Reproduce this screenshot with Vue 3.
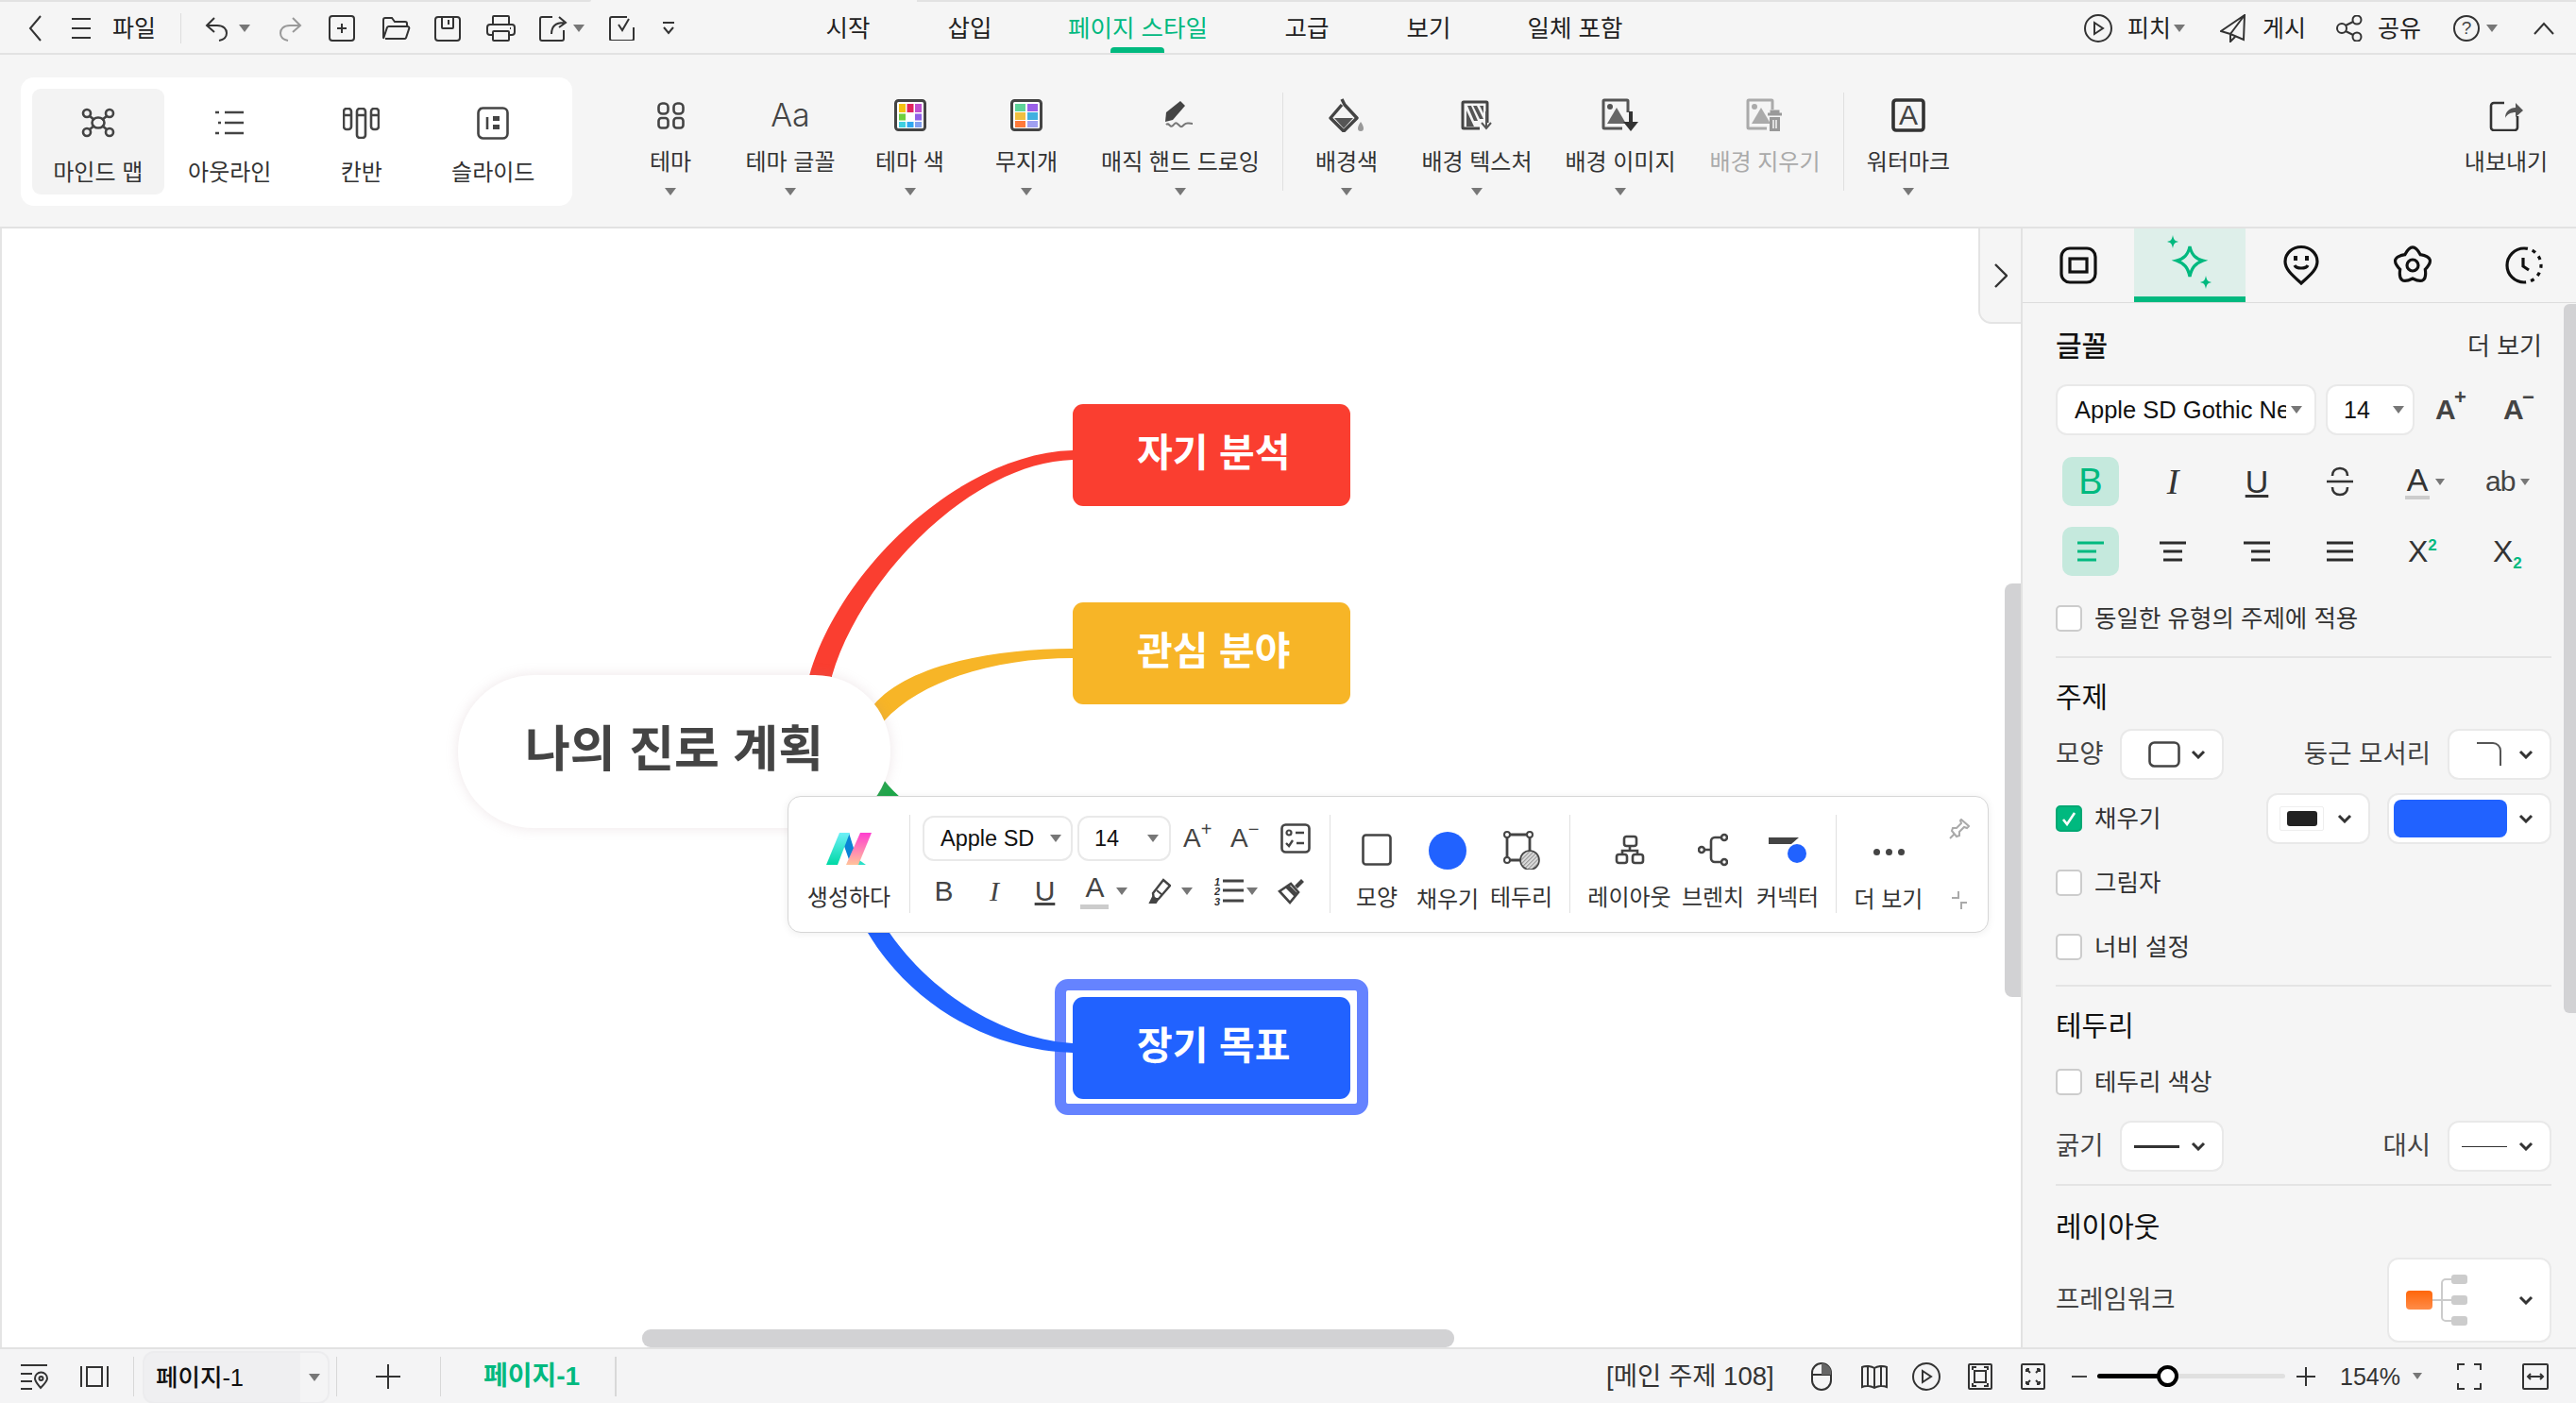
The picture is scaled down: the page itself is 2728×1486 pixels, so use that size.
<script setup>
const boardCells = [
  { label: '마인드 맵', active: true },
  { label: '아웃라인' },
  { label: '칸반' },
  { label: '슬라이드' }
]
</script>

<template>
  <div class="app">
    <div class="strip"><i class="strip-a"></i><i class="strip-b"></i></div>

    <header class="topbar">
      <div class="tb-left">
        <span class="c c46"><svg class="ic" width="16" height="28" viewBox="0 0 16 28"><path d="M14 1 3 14l11 13"/></svg></span>
        <span class="c c52"><svg class="ic" width="22" height="24" viewBox="0 0 22 24"><path d="M1 2h20M1 12h20M1 22h20"/></svg></span>
        <span class="c c60 tx">파일</span>
        <span class="c c38"><i class="vr v32"></i></span>
        <span class="c c40"><svg class="ic" width="28" height="27" viewBox="0 0 28 27"><path d="M11 2 3 10l8 7M3 10h11c7 0 10 4 10 8 0 4-3 7-8 8"/></svg></span>
        <span class="c c18"><i class="caret"></i></span>
        <span class="c c78"><svg class="ic grey" width="28" height="27" viewBox="0 0 28 27"><path d="m17 2 8 8-8 7M25 10H14C7 10 4 14 4 18c0 4 3 7 8 8"/></svg></span>
        <span class="c c32"><svg class="ic" width="28" height="28" viewBox="0 0 28 28"><rect x="1" y="1" width="26" height="26" rx="3"/><path d="M14 9v10M9 14h10"/></svg></span>
        <span class="c c82"><svg class="ic" width="32" height="26" viewBox="0 0 32 26"><path d="M3 23V4a2 2 0 0 1 2-2h7l3 4h11a2 2 0 0 1 2 2v3"/><path d="M3 24 7 12a2 2 0 0 1 2-1h19c2 0 3 1 2 3l-3 9a2 2 0 0 1-2 1H5"/></svg></span>
        <span class="c c28"><svg class="ic" width="28" height="27" viewBox="0 0 28 27"><rect x="1" y="1" width="26" height="25" rx="3"/><path d="M8 1v11a1 1 0 0 0 1 1h10a1 1 0 0 0 1-1V1M15 4v5"/></svg></span>
        <span class="c c84"><svg class="ic" width="31" height="28" viewBox="0 0 31 28"><path d="M7 10V2a1 1 0 0 1 1-1h15a1 1 0 0 1 1 1v8M7 21H4a3 3 0 0 1-3-3v-5a3 3 0 0 1 3-3h23a3 3 0 0 1 3 3v5a3 3 0 0 1-3 3h-3"/><rect x="7" y="17" width="17" height="10" rx="1"/><path d="M25 14h1"/></svg></span>
        <span class="c c28"><svg class="ic" width="30" height="27" viewBox="0 0 30 27"><path d="M14 1H3a2 2 0 0 0-2 2v21a2 2 0 0 0 2 2h21a2 2 0 0 0 2-2V15"/><path d="M13 19c0-8 4-12 13-12M21 1l7 6-7 5"/></svg></span>
        <span class="c c26"><i class="caret"></i></span>
        <span class="c c66"><svg class="ic" width="28" height="26" viewBox="0 0 28 26"><path d="M19 1H3a2 2 0 0 0-2 2v21a2 2 0 0 0 2 2h21a2 2 0 0 0 2-2V12"/><path d="M21 3 14 15l-4-6"/></svg></span>
        <span class="c c32"><svg class="ic" width="14" height="14" viewBox="0 0 14 14"><path d="M1 1h12M2 6l5 6 5-6"/></svg></span>
      </div>

      <nav class="tabs">
        <span class="tab w128">시작</span>
        <span class="tab w130">삽입</span>
        <span class="tab w226 on">페이지 스타일</span>
        <span class="tab w132">고급</span>
        <span class="tab w126">보기</span>
        <span class="tab w184">일체 포함</span>
      </nav>

      <div class="tb-right">
        <span class="c c60"><svg class="ic" width="30" height="30" viewBox="0 0 30 30"><circle cx="15" cy="15" r="14"/><path d="M11 9v12l9-6z"/></svg></span>
        <span class="c c48 tx">피치</span>
        <span class="c c16"><i class="caret"></i></span>
        <span class="c c50 ml24"><svg class="ic" width="28" height="30" viewBox="0 0 28 30"><path d="M26 1 1 18l10 3 14 6zM26 1 11 21l0 8 5-5"/></svg></span>
        <span class="c c46 ml6 tx">게시</span>
        <span class="c c48 ml22"><svg class="ic" width="28" height="28" viewBox="0 0 28 28"><circle cx="6" cy="14" r="5"/><circle cx="22" cy="5" r="4.5"/><circle cx="22" cy="23" r="4.5"/><path d="m10 11 8-4M10 17l8 4"/></svg></span>
        <span class="c c46 ml6 tx">공유</span>
        <span class="c c40 ml28"><svg class="ic" width="28" height="28" viewBox="0 0 28 28"><circle cx="14" cy="14" r="13"/><text x="14" y="20" class="qm">?</text></svg></span>
        <span class="c c14"><i class="caret"></i></span>
        <span class="c c40 ml28"><svg class="ic" width="24" height="14" viewBox="0 0 24 14"><path d="m2 13 10-11 10 11"/></svg></span>
      </div>
    </header>

    <section class="ribbon">
      <div class="board">
        <div v-for="(cell, i) in boardCells" :key="cell.label" class="board-cell" :class="{ on: cell.active }">
          <span class="icon-box">
            <svg v-if="i === 0" class="ic thick" width="36" height="32" viewBox="0 0 36 32"><circle cx="6" cy="6" r="4"/><circle cx="30" cy="6" r="4"/><circle cx="6" cy="26" r="4"/><circle cx="30" cy="26" r="4"/><ellipse cx="18" cy="16" rx="6.5" ry="5.5"/><path d="m9 9 5 4M27 9l-5 4M9 23l5-4M27 23l-5-4"/></svg>
            <svg v-if="i === 1" class="ic thick" width="32" height="28" viewBox="0 0 32 28"><path d="M1 3h4M11 3h20M4 14h3M11 14h20M1 25h4M11 25h20"/></svg>
            <svg v-if="i === 2" class="ic thick" width="39" height="33" viewBox="0 0 39 33"><rect x="1" y="1" width="8" height="22" rx="3"/><rect x="15" y="1" width="9" height="31" rx="3"/><rect x="30" y="1" width="8" height="22" rx="3"/><path d="M1 8h8M15 8h9M30 8h8"/></svg>
            <svg v-if="i === 3" class="ic thick" width="34" height="35" viewBox="0 0 34 35"><rect x="1.5" y="1.5" width="31" height="32" rx="5"/><path d="M11 11v13"/><rect x="17" y="10" width="7" height="5" class="solid"/><rect x="17" y="19" width="7" height="5" class="solid"/></svg>
          </span>
          <span class="lbl">{{ cell.label }}</span>
        </div>
      </div>

      <div class="tools">
        <div class="tool">
          <span class="icon-box"><svg class="ic thick" width="29" height="29" viewBox="0 0 29 29"><rect x="1.5" y="1.5" width="10" height="11" rx="4"/><rect x="17.5" y="1.5" width="10" height="11" rx="4"/><rect x="1.5" y="17" width="10" height="10.5" rx="3"/><rect x="17.5" y="17" width="10" height="10.5" rx="3"/></svg></span>
          <span class="lbl">테마</span><i class="caret"></i>
        </div>
        <div class="tool">
          <span class="icon-box aa">Aa</span>
          <span class="lbl">테마 글꼴</span><i class="caret"></i>
        </div>
        <div class="tool">
          <span class="icon-box">
            <svg width="34" height="34" viewBox="0 0 34 34"><rect x="1.5" y="1.5" width="31" height="31" rx="3" fill="#fff" stroke="#444" stroke-width="3"/><rect x="5" y="5" width="7" height="9" fill="#f5c211"/><rect x="13.5" y="5" width="7" height="9" fill="#e0245e"/><rect x="22" y="5" width="7" height="9" fill="#c050d0"/><rect x="5" y="15.5" width="7" height="7" fill="#6fcf3f"/><rect x="22" y="15.5" width="7" height="7" fill="#9060e8"/><rect x="5" y="24" width="7" height="6" fill="#40d0e0"/><rect x="13.5" y="24" width="7" height="6" fill="#30a8f0"/><rect x="22" y="24" width="7" height="6" fill="#80a0f0"/></svg>
          </span>
          <span class="lbl">테마 색</span><i class="caret"></i>
        </div>
        <div class="tool">
          <span class="icon-box">
            <svg width="34" height="34" viewBox="0 0 34 34"><rect x="1.5" y="1.5" width="31" height="31" rx="3" fill="#fff" stroke="#444" stroke-width="3"/><rect x="5" y="5" width="11" height="8" fill="#5ed39a"/><rect x="18" y="5" width="11" height="8" fill="#9a60e8"/><rect x="5" y="14" width="11" height="8" fill="#f0c040"/><rect x="18" y="14" width="11" height="8" fill="#40b0e0"/><rect x="5" y="23" width="11" height="7" fill="#ff7a3a"/><rect x="18" y="23" width="11" height="7" fill="#a0a0f0"/></svg>
          </span>
          <span class="lbl">무지개</span><i class="caret"></i>
        </div>
        <div class="tool">
          <span class="icon-box">
            <svg width="34" height="30" viewBox="0 0 34 30"><path d="M17 0 22 5 9 20 1 22 2 12z" fill="#444"/><path d="M2 25c3-3 4 4 7 1s3-4 6-1 3 3 6 0 4-1 9-1" fill="none" stroke="#777" stroke-width="2"/></svg>
          </span>
          <span class="lbl">매직 핸드 드로잉</span><i class="caret"></i>
        </div>
        <i class="vr tool-vr"></i>
        <div class="tool">
          <span class="icon-box">
            <svg width="38" height="36" viewBox="0 0 38 36"><path d="M14 1l3 6L30 21 16 35 2 21 14 7" fill="none" stroke="#444" stroke-width="3.4" stroke-linejoin="round"/><path d="M6 21h20L16 32z" fill="#555"/><path d="M34 25c2 3 3 5 3 7a3 3 0 0 1-6 0c0-2 1-4 3-7z" fill="#999"/></svg>
          </span>
          <span class="lbl">배경색</span><i class="caret"></i>
        </div>
        <div class="tool">
          <span class="icon-box">
            <svg width="34" height="32" viewBox="0 0 34 32"><path d="M28 24V3a1 1 0 0 0-1-1H3a1 1 0 0 0-1 1v26a1 1 0 0 0 1 1h17" fill="none" stroke="#444" stroke-width="3"/><path d="M7 6h4l7 16h-4zM13 6h4l7 14h-4zM6 11l8 17H6zM20 6h4v8z" fill="#555"/><path d="M27 12v18M22 24l5 6 5-6" fill="none" stroke="#555" stroke-width="2"/></svg>
          </span>
          <span class="lbl">배경 텍스처</span><i class="caret"></i>
        </div>
        <div class="tool">
          <span class="icon-box">
            <svg width="40" height="36" viewBox="0 0 40 36"><path d="M28 15V3a1 1 0 0 0-1-1H3a1 1 0 0 0-1 1v28a1 1 0 0 0 1 1h19" fill="none" stroke="#555" stroke-width="3"/><circle cx="9" cy="9" r="3" fill="#555"/><path d="M6 27 16 10l10 17z" fill="#666"/><path d="M31 14v18" stroke="#333" stroke-width="4"/><path d="m23 25 8 10 8-10z" fill="#333"/></svg>
          </span>
          <span class="lbl">배경 이미지</span><i class="caret"></i>
        </div>
        <div class="tool off">
          <span class="icon-box">
            <svg width="40" height="36" viewBox="0 0 40 36"><path d="M28 12V3a1 1 0 0 0-1-1H3a1 1 0 0 0-1 1v28a1 1 0 0 0 1 1h19" fill="none" stroke="#aaa" stroke-width="3"/><circle cx="9" cy="9" r="3" fill="#aaa"/><path d="M6 27 16 10l10 17z" fill="#aaa"/><path d="M23 17h15M27 17v-3h7v3" fill="none" stroke="#999" stroke-width="3"/><path d="M25 20h11v15H25z" fill="#999"/><path d="M29 23v9M32 23v9" stroke="#f5f5f5" stroke-width="1.5"/></svg>
          </span>
          <span class="lbl">배경 지우기</span>
        </div>
        <i class="vr tool-vr"></i>
        <div class="tool">
          <span class="icon-box">
            <svg width="36" height="36" viewBox="0 0 36 36"><rect x="2" y="2" width="32" height="32" rx="3" fill="none" stroke="#333" stroke-width="3.6"/><text x="18" y="28" class="wm">A</text></svg>
          </span>
          <span class="lbl">워터마크</span><i class="caret"></i>
        </div>
      </div>

      <div class="tool export">
        <span class="icon-box">
          <svg class="ic" width="36" height="34" viewBox="0 0 36 34"><path d="M16 4H5a3 3 0 0 0-3 3v23a3 3 0 0 0 3 3h22a3 3 0 0 0 3-3V18" stroke-width="2.6"/><path d="M17 20c0-7 5-11 11-11V4l8 8-8 7v-5c-5 0-9 2-11 6z" fill="#555" stroke="none"/></svg>
        </span>
        <span class="lbl">내보내기</span>
      </div>
    </section>

    <main class="workspace">
      <div class="canvas">
        <div class="frame"></div>

        <svg class="links" width="2140" height="1185" viewBox="0 242 2140 1185">
          <path fill="#fa3e30" d="M857 760V716C890 600 1020 480 1136 477V487C1030 490 912 610 881 716V760Z"/>
          <path fill="#f7b527" d="M915 760 925 747C960 705 1050 687 1136 687V697C1055 697 975 720 935 765L920 790Z"/>
          <path fill="#1fa84b" d="M936 826Q945 838 960 850H922Q931 838 934 826Z"/>
          <path fill="#2162ff" d="M908 970H935L942 988C985 1050 1060 1100 1136 1105V1115C1050 1113 965 1065 919 988Z"/>
        </svg>

        <div class="node red">자기 분석</div>
        <div class="node yellow">관심 분야</div>
        <div class="node blue">장기 목표</div>
        <div class="root">나의 진로 계획</div>

        <div class="float">
          <div class="f-cell w128">
            <svg class="f-logo" width="48" height="34" viewBox="0 0 48 34">
              <defs>
                <linearGradient id="lg1" x1="0" y1="0" x2="0" y2="1"><stop offset="0" stop-color="#6ef0f8"/><stop offset="1" stop-color="#00d9a5"/></linearGradient>
                <linearGradient id="lg2" x1="0" y1="0" x2="0" y2="1"><stop offset="0" stop-color="#ff3ed0"/><stop offset="1" stop-color="#ffc39a"/></linearGradient>
              </defs>
              <path d="M14 0h10l8 26 5 8H26z" fill="#0a84d6"/>
              <path d="M31 26l11 8H31z" fill="#2ce0c8"/>
              <path d="M14 0h11L12 34H0z" fill="url(#lg1)"/>
              <path d="M36 0h12L34 34H21z" fill="url(#lg2)"/>
            </svg>
            <span class="lbl">생성하다</span>
          </div>
          <i class="vr f-vr"></i>
          <div class="f-mid">
            <div class="f-row">
              <span class="sel f-font"><span class="sel-t">Apple SD</span><i class="caret"></i></span>
              <span class="sel f-size"><span class="sel-t">14</span><i class="caret"></i></span>
              <span class="grow-a g1">A<sup>+</sup></span>
              <span class="grow-a g2">A<sup>−</sup></span>
              <svg class="ic f-check" width="32" height="32" viewBox="0 0 32 32"><rect x="1.5" y="1.5" width="29" height="29" rx="4" stroke-width="2.6"/><circle cx="9" cy="10" r="2.5"/><path d="M16 10h9M6 21l3 3 4-6M17 21h8" stroke-width="2.4"/></svg>
            </div>
            <div class="f-row2">
              <span class="tf b1">B</span>
              <span class="tf i1">I</span>
              <span class="tf u1">U</span>
              <span class="tf a1">A</span>
              <i class="caret c1"></i>
              <svg class="h1" width="24" height="28" viewBox="0 0 24 28"><path d="M16 2 23 8 11 22l-5 1-1-7z" fill="none" stroke="#444" stroke-width="2.4"/><path d="M5 20 2 26h6l2-3zM9 13l6 5" fill="#444" stroke="#444" stroke-width="2"/></svg>
              <i class="caret c2"></i>
              <svg class="l1" width="34" height="32" viewBox="0 0 34 32"><text x="0" y="10" class="ln">1</text><text x="0" y="20" class="ln">2</text><text x="0" y="31" class="ln">3</text><path d="M9 5h22M9 15h22M9 26h22" stroke="#444" stroke-width="3"/></svg>
              <i class="caret c3"></i>
              <svg class="b2" width="28" height="28" viewBox="0 0 28 28"><path d="M2 14 14 6l8 9-9 11z" fill="none" stroke="#444" stroke-width="2.6"/><path d="M8 10l4-3 9 9-3 4zM18 8l7-7 3 3-7 7z" fill="#444"/></svg>
            </div>
          </div>
          <i class="vr f-vr"></i>
          <div class="f-cell w76 ml11">
            <svg class="ic thick f-ic" width="32" height="34" viewBox="0 0 32 34"><rect x="1.5" y="1.5" width="29" height="31" rx="3"/></svg>
            <span class="lbl">모양</span>
          </div>
          <div class="f-cell w74">
            <span class="dot"></span>
            <span class="lbl">채우기</span>
          </div>
          <div class="f-cell w82">
            <svg class="f-ic" width="40" height="42" viewBox="0 0 40 42"><defs><pattern id="hatch" width="3" height="3" patternUnits="userSpaceOnUse" patternTransform="rotate(45)"><rect width="3" height="3" fill="#e8e8e8"/><rect width="1.4" height="3" fill="#999"/></pattern></defs><path d="M5 5h24M5 5v27M5 32h20M29 5v20" stroke="#444" stroke-width="2.8" fill="none"/><circle cx="5" cy="5" r="3" fill="#fff" stroke="#444" stroke-width="2"/><circle cx="29" cy="5" r="3" fill="#fff" stroke="#444" stroke-width="2"/><circle cx="5" cy="32" r="3" fill="#fff" stroke="#444" stroke-width="2"/><circle cx="29" cy="32" r="10" fill="url(#hatch)" stroke="#444" stroke-width="1.6"/></svg>
            <span class="lbl">테두리</span>
          </div>
          <i class="vr f-vr ml10"></i>
          <div class="f-cell w91 ml17">
            <svg class="ic thick f-ic" width="32" height="32" viewBox="0 0 32 32"><rect x="10" y="2" width="13" height="10" rx="2.5"/><rect x="2" y="21" width="11" height="9" rx="2.5"/><rect x="19" y="21" width="11" height="9" rx="2.5"/><path d="M16 12v5M8 21v-4h16v4"/></svg>
            <span class="lbl">레이아웃</span>
          </div>
          <div class="f-cell w86">
            <svg class="ic thick f-ic" width="32" height="34" viewBox="0 0 32 34"><circle cx="4" cy="17" r="3"/><circle cx="28" cy="4" r="3"/><circle cx="28" cy="30" r="3"/><path d="M7 17h6M25 4h-7a4 4 0 0 0-4 4v18a4 4 0 0 0 4 4h7"/></svg>
            <span class="lbl">브렌치</span>
          </div>
          <div class="f-cell w72">
            <svg class="f-ic" width="40" height="34" viewBox="0 0 40 34"><path d="M0 4h32L24 11H0z" fill="#444"/><ellipse cx="30" cy="21" rx="10" ry="10" fill="#2162ff"/></svg>
            <span class="lbl">커넥터</span>
          </div>
          <i class="vr f-vr ml15"></i>
          <div class="f-cell w78 ml16">
            <span class="dots"><i></i><i></i><i></i></span>
            <span class="lbl">더 보기</span>
          </div>
          <div class="f-side">
            <svg class="pin" width="22" height="22" viewBox="0 0 22 22"><path d="M13 1 21 8l-2 2-3-1-5 5 0 4-3 1-5-6 1-3 4 0 5-5-1-3zM6 16l-5 5" fill="none" stroke="#aaa" stroke-width="2"/></svg>
            <svg class="shrink" width="16" height="22" viewBox="0 0 16 22"><path d="M0 8h7V1M10 20v-7h6" fill="none" stroke="#aaa" stroke-width="2"/></svg>
          </div>
        </div>

        <div class="vbar"></div>
        <div class="hbar"></div>
        <div class="collapse"><svg class="ic" width="14" height="26" viewBox="0 0 14 26"><path d="m1 1 12 12L1 25" stroke-width="2.4"/></svg></div>
      </div>

      <aside class="panel">
        <div class="p-tabs">
          <span class="p-tab"><svg width="40" height="40" viewBox="0 0 40 40" class="pt"><rect x="2" y="2" width="36" height="36" rx="9"/><rect x="11" y="13" width="18" height="14"/></svg></span>
          <span class="p-tab on"><svg width="50" height="58" viewBox="0 0 50 58" class="pt green"><path d="M25 12c2 9 6 13 14 15-8 3-12 7-14 17-2-10-6-14-14-17 8-2 12-6 14-15z"/><path class="solid" d="M7 0c1 5 2 6 6 7-4 1-5 2-6 7-1-5-2-6-6-7 4-1 5-2 6-7zM42 43c1 5 2 6 6 7-4 1-5 2-6 7-1-5-2-6-6-7 4-1 5-2 6-7z"/></svg></span>
          <span class="p-tab"><svg width="38" height="42" viewBox="0 0 38 42" class="pt"><path d="M19 40C9 31 2 25 2 17a17 15.500 0 0 1 34 0c0 8-7 14-17 23z"/><path class="solid" d="M11 11h4v5h-4zM23 11h4v5h-4z"/><path d="M12 21c2 4 12 4 14 0"/></svg></span>
          <span class="p-tab"><svg width="40" height="40" viewBox="0 0 40 40" class="pt"><path d="M11.800 8.700Q20-7 28.200 8.700Q45.700 11.700 33.300 24.300Q35.900 41.800 20 34Q4.100 41.800 6.700 24.300Q-5.700 11.700 11.800 8.700Z"/><circle cx="20" cy="20" r="6"/></svg></span>
          <span class="p-tab"><svg width="40" height="40" viewBox="0 0 40 40" class="pt"><path d="M20 2A18 18 0 0 0 20 38"/><path d="M20 2A18 18 0 0 1 20 38" stroke-dasharray="4 5"/><path d="M19 12v9l6 4"/></svg></span>
        </div>

        <div class="p-body">
          <div class="p-head h1st"><span>글꼴</span><span class="more">더 보기</span></div>

          <div class="p-row mt20">
            <span class="sel p-font"><span class="clip">Apple SD Gothic Neo</span><i class="caret"></i></span>
            <span class="sel p-size"><span class="sel-t big">14</span><i class="caret"></i></span>
            <span class="grow-b g3">A<b>+</b></span>
            <span class="grow-b g4">A<b class="minus">−</b></span>
          </div>

          <div class="p-row mt23 h52">
            <span class="tg on ml7">B</span>
            <span class="tg it ml27">I</span>
            <span class="tg un ml29">U</span>
            <span class="tg ml28"><svg width="28" height="32" viewBox="0 0 28 32"><path d="M6 10c0-5 3-8 8-8s8 3 8 8M0 16h28M6 22c0 5 3 8 8 8s8-3 8-8" fill="none" stroke="#333" stroke-width="2.600"/></svg></span>
            <span class="aa2 ml39">A</span><i class="caret ml6 small"></i>
            <span class="ab ml43">ab</span><i class="caret ml3 small"></i>
          </div>

          <div class="p-row mt22 h52">
            <span class="tg on ml7"><svg width="28" height="22" viewBox="0 0 28 22"><path d="M0 2h28M0 11h20M0 20h20" stroke="#00b97f" stroke-width="3"/></svg></span>
            <span class="tg ml27"><svg width="28" height="22" viewBox="0 0 28 22"><path d="M0 2h28M4 11h20M4 20h20" stroke="#2b2b2b" stroke-width="3"/></svg></span>
            <span class="tg ml29"><svg width="28" height="22" viewBox="0 0 28 22"><path d="M0 2h28M8 11h20M8 20h20" stroke="#2b2b2b" stroke-width="3"/></svg></span>
            <span class="tg ml28"><svg width="28" height="22" viewBox="0 0 28 22"><path d="M0 2h28M0 11h28M0 20h28" stroke="#2b2b2b" stroke-width="3"/></svg></span>
            <span class="sx x1">X<sup>2</sup></span>
            <span class="sx x2">X<sub>2</sub></span>
          </div>

          <label class="chk mt31"><i class="box"></i><span>동일한 유형의 주제에 적용</span></label>
          <hr class="rule mt26" />

          <div class="p-head mt22"><span>주제</span></div>
          <div class="p-row mt13">
            <span class="p-lbl w68">모양</span>
            <span class="sel p-mini">
              <svg class="sq" width="34" height="28" viewBox="0 0 34 28"><rect x="1.500" y="1.500" width="31" height="25" rx="5" fill="none" stroke="#444" stroke-width="2.600"/></svg>
              <svg class="chev" width="16" height="10" viewBox="0 0 16 10"><path d="m2 2 6 6 6-6"/></svg>
            </span>
            <span class="p-lbl r-lbl">둥근 모서리</span>
            <span class="sel p-mini">
              <svg class="sq" width="28" height="26" viewBox="0 0 28 26"><path d="M1 1h17a8 8 0 0 1 8 8v16" fill="none" stroke="#555" stroke-width="2"/></svg>
              <svg class="chev" width="16" height="10" viewBox="0 0 16 10"><path d="m2 2 6 6 6-6"/></svg>
            </span>
          </div>
          <div class="p-row mt14">
            <label class="chk"><i class="box green"><svg width="16" height="16" viewBox="0 0 16 16"><path d="m2 9 4 5 8-12" fill="none" stroke="#fff" stroke-width="2.600"/></svg></i><span>채우기</span></label>
            <span class="sel p-mini c-black">
              <span class="swatch"><i></i></span>
              <svg class="chev" width="16" height="10" viewBox="0 0 16 10"><path d="m2 2 6 6 6-6"/></svg>
            </span>
            <span class="sel p-wide">
              <i class="blue-sw"></i>
              <svg class="chev" width="16" height="10" viewBox="0 0 16 10"><path d="m2 2 6 6 6-6"/></svg>
            </span>
          </div>
          <label class="chk mt27"><i class="box"></i><span>그림자</span></label>
          <label class="chk mt40"><i class="box"></i><span>너비 설정</span></label>
          <hr class="rule mt26" />

          <div class="p-head mt22"><span>테두리</span></div>
          <label class="chk mt25"><i class="box"></i><span>테두리 색상</span></label>
          <div class="p-row mt27">
            <span class="p-lbl w68">굵기</span>
            <span class="sel p-mini">
              <i class="ln-thick"></i>
              <svg class="chev" width="16" height="10" viewBox="0 0 16 10"><path d="m2 2 6 6 6-6"/></svg>
            </span>
            <span class="p-lbl r-lbl">대시</span>
            <span class="sel p-mini">
              <i class="ln-thin"></i>
              <svg class="chev" width="16" height="10" viewBox="0 0 16 10"><path d="m2 2 6 6 6-6"/></svg>
            </span>
          </div>
          <hr class="rule mt13" />

          <div class="p-head mt24"><span>레이아웃</span></div>
          <div class="p-row mt12">
            <span class="p-lbl">프레임워크</span>
            <span class="sel p-frame">
              <svg width="68" height="54" viewBox="0 0 68 54"><defs><linearGradient id="org" x1="0" y1="0" x2="0" y2="1"><stop offset="0" stop-color="#ff660a"/><stop offset="1" stop-color="#ff8c48"/></linearGradient></defs><path d="M28 27h20M48 5h-6a4 4 0 0 0-4 4v36a4 4 0 0 0 4 4h6" fill="none" stroke="#ccc" stroke-width="2"/><rect x="0" y="17" width="28" height="20" rx="4" fill="url(#org)"/><rect x="48" y="0" width="17" height="10" rx="3" fill="#ccc"/><rect x="48" y="22" width="17" height="10" rx="3" fill="#ccc"/><rect x="48" y="44" width="17" height="10" rx="3" fill="#ccc"/></svg>
              <svg class="chev" width="16" height="10" viewBox="0 0 16 10"><path d="m2 2 6 6 6-6"/></svg>
            </span>
          </div>
        </div>
        <div class="p-scroll"></div>
      </aside>
    </main>

    <footer class="status">
      <svg class="ic s1" width="30" height="28" viewBox="0 0 30 28"><path d="M1 2h28M1 11h12M1 19h12M1 27h12"/><path d="M22 26c-4-5-6-7-6-10a6.500 6.500 0 0 1 13 0c0 3-3 6-7 10z"/><circle cx="22.500" cy="16" r="2"/></svg>
      <svg class="ic s2" width="30" height="24" viewBox="0 0 30 24"><path d="M1 1v22M29 1v22"/><rect x="7" y="2" width="16" height="20"/></svg>
      <i class="vr s-vr s3"></i>
      <span class="page-sel"><span class="page-name">페이지-1</span><span class="page-drop"><i class="caret"></i></span></span>
      <i class="vr s-vr s4"></i>
      <svg class="ic s5" width="26" height="26" viewBox="0 0 26 26"><path d="M13 0v26M0 13h26"/></svg>
      <i class="vr s-vr s6"></i>
      <span class="page-on">페이지-1</span>
      <i class="vr s-vr s7"></i>
      <span class="s-info">[메인 주제 108]</span>
      <svg class="ic s8" width="22" height="30" viewBox="0 0 22 30"><rect x="1" y="1" width="20" height="28" rx="10"/><path d="M1 13h20"/><path d="M11 1a10 10 0 0 1 10 12H11z" fill="#666" stroke="none"/></svg>
      <svg class="ic s9" width="30" height="26" viewBox="0 0 30 26"><path d="M15 4C12 2 6 1 2 3v21c4-2 10-1 13 1 3-2 9-3 13-1V3c-4-2-10-1-13 1zM15 4v21M8 3v20M22 3v20"/></svg>
      <svg class="ic s10" width="30" height="30" viewBox="0 0 30 30"><circle cx="15" cy="15" r="14"/><path d="M11 9v12l9-6z"/></svg>
      <svg class="ic s11" width="26" height="28" viewBox="0 0 26 28"><rect x="1" y="1" width="24" height="26" rx="1"/><rect x="7" y="8" width="12" height="12"/><path d="M5 7V4h4M17 4h4v3M5 21v3h4M17 24h4v-3"/></svg>
      <svg class="ic s12" width="26" height="28" viewBox="0 0 26 28"><rect x="1" y="1" width="24" height="26" rx="1"/><path d="m6 6 4 4M6 6h3M6 6v3M20 6l-4 4M20 6h-3M20 6v3M6 22l4-4M6 22h3M6 22v-3M20 22l-4-4M20 22h-3M20 22v-3"/></svg>
      <i class="minus-b"></i>
      <span class="slider"><i class="fill"></i><i class="knob"></i></span>
      <svg class="ic s13" width="20" height="20" viewBox="0 0 20 20"><path d="M10 0v20M0 10h20"/></svg>
      <span class="zoom-v">154%</span>
      <i class="caret s14"></i>
      <svg class="ic s15" width="26" height="28" viewBox="0 0 26 28"><path d="M1 7V1h7M18 1h7v6M1 21v6h7M18 27h7v-6"/></svg>
      <svg class="ic s16" width="28" height="28" viewBox="0 0 28 28"><rect x="1" y="1" width="26" height="26" rx="1"/><path d="M6 14h16M9 11l-3 3 3 3M19 11l3 3-3 3"/></svg>
    </footer>
  </div>
</template>

<style>
html, body { margin: 0; background: #f5f5f5; }
</style>

<style scoped>
.app {
  width: 2728px;
  height: 1486px;
  overflow: hidden;
  display: flex;
  flex-direction: column;
  background: #f5f5f5;
  color: #333;
  font-family: "Liberation Sans", "Noto Sans CJK KR", sans-serif;
  font-size: 24px;
  line-height: 30px;
}
i { display: block; font-style: normal; }

.strip { display: flex; height: 2px; flex: none; }
.strip-a { width: 626px; background: #e2e2e2; border-bottom-right-radius: 2px; }
.strip-b { margin-left: 345px; flex: 1; background: #e2e2e2; }

.topbar {
  height: 56px;
  box-sizing: border-box;
  padding-top: 2px;
  border-bottom: 2px solid #e2e2e2;
  display: flex;
  flex: none;
}
.tb-left { display: flex; padding-left: 14px; align-items: center; }
.tb-right { display: flex; margin-left: auto; padding-right: 14px; align-items: center; }
.c { display: flex; align-items: center; justify-content: center; flex: none; }
.c14 { width: 14px; } .c16 { width: 16px; } .c18 { width: 18px; } .c26 { width: 26px; } .c28 { width: 28px; }
.c32 { width: 32px; } .c38 { width: 38px; } .c40 { width: 40px; } .c46 { width: 46px; } .c48 { width: 48px; }
.c50 { width: 50px; } .c52 { width: 52px; } .c60 { width: 60px; } .c66 { width: 66px; } .c78 { width: 78px; }
.c82 { width: 82px; } .c84 { width: 84px; }
.tx { font-size: 25px; color: #222; white-space: nowrap; }
.ml3 { margin-left: 3px; } .ml6 { margin-left: 6px; } .ml7 { margin-left: 7px; } .ml10 { margin-left: 10px; }
.ml11 { margin-left: 11px; } .ml15 { margin-left: 15px; } .ml16 { margin-left: 16px; } .ml17 { margin-left: 17px; }
.ml22 { margin-left: 22px; } .ml24 { margin-left: 24px; } .ml27 { margin-left: 27px; } .ml28 { margin-left: 28px; }
.ml29 { margin-left: 29px; } .ml39 { margin-left: 39px; } .ml43 { margin-left: 43px; }

.ic { fill: none; stroke: #333; stroke-width: 2; display: block; flex: none; }
.ic .solid { fill: #444; stroke: none; }
.ic.thick { stroke: #444; stroke-width: 2.6; }
.ic.grey { stroke: #999; }
.qm { fill: #444; stroke: none; font-size: 19px; text-anchor: middle; }
.vr { width: 2px; background: #e2e2e2; flex: none; }
.v32 { width: 1px; height: 32px; background: #ddd; }
.caret { width: 0; height: 0; flex: none; border-left: 6.500px solid transparent; border-right: 6.500px solid transparent; border-top: 8px solid #777; }
.caret.small { border-left-width: 5.500px; border-right-width: 5.500px; border-top-width: 7px; }

.tabs { display: flex; margin-left: 110px; }
.tab { position: relative; display: flex; align-items: center; justify-content: center; font-size: 25.500px; color: #222; flex: none; }
.tab.on { color: #00b97f; }
.tab.on::after { content: ""; position: absolute; left: 84px; bottom: 0; width: 57px; height: 6px; border-radius: 4px 4px 0 0; background: #00b97f; }
.w128 { width: 128px; } .w130 { width: 130px; } .w226 { width: 226px; } .w132 { width: 132px; } .w126 { width: 126px; }
.w184 { width: 184px; } .w76 { width: 76px; } .w74 { width: 74px; } .w82 { width: 82px; } .w91 { width: 91px; }
.w86 { width: 86px; } .w72 { width: 72px; } .w78 { width: 78px; } .w68 { width: 68px; }

.ribbon {
  height: 184px;
  box-sizing: border-box;
  flex: none;
  border-bottom: 2px solid #e2e2e2;
  display: flex;
  align-items: flex-start;
  padding-left: 22px;
}
.board {
  margin-top: 24px;
  width: 584px;
  height: 136px;
  box-sizing: border-box;
  padding: 12px 14px 12px 12px;
  background: #fff;
  border-radius: 14px;
  display: flex;
  flex: none;
}
.board-cell {
  width: 139.500px;
  height: 112px;
  box-sizing: border-box;
  padding-top: 14px;
  display: flex;
  flex-direction: column;
  align-items: center;
  border-radius: 9px;
}
.board-cell.on { background: #f3f3f3; }
.icon-box { height: 44px; display: flex; align-items: center; justify-content: center; flex: none; }
.board-cell .lbl { margin-top: 16px; }
.lbl { height: 30px; line-height: 30px; white-space: nowrap; font-size: 24px; color: #333; }

.tools {
  margin-left: 40px;
  margin-top: 42px;
  display: grid;
  grid-template-columns: 128px 126px 127px 120px 206px 10px 126px 150px 154px 152px 14px 124px;
}
.tool { display: flex; flex-direction: column; align-items: center; }
.tool .lbl { margin-top: 13px; }
.tool .caret { margin-top: 12px; }
.tool.off .lbl { color: #aaa; }
.tool-vr { width: 1px; height: 104px; margin-top: -2px; justify-self: center; background: #e0e0e0; }
.aa { font-size: 34px; font-weight: 300; color: #444; font-family: Inter, "Liberation Sans", sans-serif; }
.wm { fill: #444; font-size: 30px; text-anchor: middle; font-family: "Liberation Sans", sans-serif; }
.export { width: 120px; margin-left: auto; margin-right: 14px; margin-top: 42px; }

.workspace { display: flex; flex: 1; min-height: 0; }
.canvas {
  position: relative;
  width: 2140px;
  flex: none;
  box-sizing: border-box;
  background: #fff;
  border-left: 2px solid #e4e4e4;
  overflow: hidden;
}
.canvas > * { margin-left: -2px; }
.links { position: absolute; left: 0; top: 0; display: block; }
.frame { position: absolute; left: 1117px; top: 795px; width: 332px; height: 144px; box-sizing: border-box; border: 12px solid #6583ff; border-radius: 14px; }
.node {
  position: absolute;
  left: 1136px;
  width: 293.500px;
  height: 108px;
  box-sizing: border-box;
  padding-left: 5px;
  border-radius: 11px;
  color: #fff;
  font-weight: 700;
  font-size: 41px;
  line-height: 104px;
  text-align: center;
}
.node.red { top: 186px; background: #fa3e30; }
.node.yellow { top: 396px; background: #f7b527; }
.node.blue { top: 814px; background: #2162ff; }
.root {
  position: absolute;
  left: 485px;
  top: 473px;
  width: 458px;
  height: 162px;
  border-radius: 80px;
  background: #fff;
  box-shadow: 0 0 14px rgba(170, 130, 140, .2);
  color: #444;
  font-weight: 700;
  font-size: 52px;
  line-height: 158px;
  text-align: center;
}

.float {
  position: absolute;
  left: 834px;
  top: 601px;
  width: 1272px;
  height: 145px;
  box-sizing: border-box;
  background: #fff;
  border: 1.500px solid #d6d6d6;
  border-radius: 14px;
  box-shadow: 0 1px 8px rgba(0, 0, 0, .07);
  display: flex;
  align-items: flex-start;
}
.f-cell { display: flex; flex-direction: column; align-items: center; flex: none; padding-top: 39px; height: 100%; box-sizing: border-box; }
.f-cell .lbl { position: relative; }
.f-logo { display: block; height: 34px; margin-bottom: 20px; margin-top: -1px; }
.f-ic { display: block; height: 42px; margin-top: -4px; margin-bottom: 15px; }
.f-vr { width: 1px; height: 104px; margin-top: 19px; background: #e0e0e0; }
.f-mid { width: 444px; flex: none; }
.f-row { display: flex; align-items: center; padding-left: 13px; margin-top: 20px; height: 48px; }
.f-row2 { display: flex; align-items: center; margin-top: 8px; height: 48px; }
.sel { display: flex; align-items: center; background: #fff; border: 2px solid #e9e9e9; border-radius: 12px; box-sizing: border-box; flex: none; }
.f-font { width: 159px; height: 48px; padding-left: 17px; justify-content: space-between; padding-right: 10px; }
.f-size { width: 99px; height: 48px; margin-left: 5px; padding-left: 16px; justify-content: space-between; padding-right: 11px; }
.sel-t { color: #111; font-size: 23.500px; }
.sel-t.big { font-size: 25px; }
.grow-a { font-size: 28px; color: #444; font-weight: 400; display: block; position: relative; width: 34px; flex: none; }
.grow-a sup { font-size: 20px; line-height: 0; vertical-align: 12px; }
.g1 { margin-left: 13px; }
.g2 { margin-left: 16px; }
.f-check { margin-left: 19px; stroke: #444; stroke-width: 2.2; }
.tf { font-size: 30px; color: #444; width: 30px; text-align: center; flex: none; line-height: 34px; }
.b1 { margin-left: 20.500px; }
.i1 { margin-left: 23.600px; font-family: "Liberation Serif", serif; font-style: italic; }
.u1 { margin-left: 23.400px; text-decoration: underline; text-underline-offset: 2px; text-decoration-thickness: 3px; }
.a1 { margin-left: 23px; border-bottom: 5px solid #ccc; height: 33px; line-height: 30px; }
.c1 { margin-left: 7.500px; }
.h1 { margin-left: 22.500px; flex: none; display: block; }
.c2 { margin-left: 10.500px; }
.l1 { margin-left: 23.500px; flex: none; display: block; }
.ln { fill: #333; font-size: 11px; font-weight: 700; font-style: italic; }
.c3 { margin-left: -0.500px; }
.b2 { margin-left: 21.500px; flex: none; display: block; }
.dot { display: block; width: 40px; height: 40px; border-radius: 50%; background: #2162ff; margin-top: -2px; margin-bottom: 17px; flex: none; }
.dots { display: flex; gap: 6px; height: 40px; align-items: center; margin-top: -1px; margin-bottom: 16px; }
.dots i { width: 7px; height: 7px; border-radius: 50%; background: #444; }
.f-side { margin-left: 12px; width: 48px; display: flex; flex-direction: column; align-items: center; flex: none; }
.pin { display: block; margin-top: 23px; }
.shrink { display: block; margin-top: 54px; }

.vbar { position: absolute; left: 2123px; top: 376px; width: 17px; height: 438px; border-radius: 8px 0 0 8px; background: #d2d2d4; }
.hbar { position: absolute; left: 680px; top: 1166px; width: 860px; height: 19px; border-radius: 9px; background: #d2d2d4; }
.collapse {
  position: absolute;
  left: 2095px;
  top: 0;
  width: 45px;
  height: 101px;
  box-sizing: border-box;
  background: #f5f5f5;
  border: 2px solid #e4e4e4;
  border-right: 0;
  border-top: 0;
  border-radius: 0 0 0 14px;
  display: flex;
  align-items: center;
  justify-content: center;
  padding-top: 1px;
}

.panel { position: relative; width: 588px; flex: none; box-sizing: border-box; border-left: 2px solid #e2e2e2; overflow: hidden; }
.p-tabs { display: grid; grid-template-columns: repeat(5, 118px); height: 79px; box-sizing: border-box; border-bottom: 1px solid #dcdcdc; }
.p-tab { display: flex; align-items: center; justify-content: center; height: 78px; box-sizing: border-box; }
.p-tab.on { background: #deefea; border-bottom: 6px solid #00b97f; }
.pt { fill: none; stroke: #111; stroke-width: 3.200; display: block; overflow: visible; }
.pt .solid { fill: #111; stroke: none; }
.pt.green { stroke: #00b97f; }
.pt.green .solid { fill: #00b97f; }
.p-body { padding: 0 26px 0 35px; }
.p-scroll { position: absolute; right: 0; top: 80px; width: 13px; height: 751px; border-radius: 6px 0 0 6px; background: #d2d2d4; }
.p-head { display: flex; justify-content: space-between; height: 40px; line-height: 40px; font-size: 30px; color: #111; }
.h1st { margin-top: 26px; font-weight: 500; }
.more { font-size: 26px; color: #333; font-weight: 400; margin-right: 10px; }
.p-row { display: flex; align-items: center; }
.h52 { height: 52px; }
.mt12 { margin-top: 12px; } .mt13 { margin-top: 13px; } .mt14 { margin-top: 14px; } .mt20 { margin-top: 20px; }
.mt22 { margin-top: 22px; } .mt23 { margin-top: 23px; } .mt24 { margin-top: 24px; } .mt25 { margin-top: 25px; }
.mt26 { margin-top: 26px; } .mt27 { margin-top: 27px; } .mt31 { margin-top: 31px; } .mt40 { margin-top: 40px; }
.p-font { width: 276px; height: 54px; padding-left: 18px; }
.clip { width: 224px; overflow: hidden; white-space: nowrap; color: #111; font-size: 25.500px; flex: none; }
.p-font .caret { margin-left: 5px; }
.p-size { width: 94px; height: 54px; margin-left: 10px; padding-left: 17px; padding-right: 9px; justify-content: space-between; }
.grow-b { position: relative; font-size: 30px; font-weight: 700; color: #444; width: 34px; flex: none; line-height: 34px; }
.grow-b b { position: absolute; left: 20px; top: -9px; font-size: 22px; line-height: 26px; }
.grow-b .minus { left: 20px; top: -9px; }
.g3 { margin-left: 22px; }
.g4 { margin-left: 38px; }
.tg { width: 60px; height: 52px; border-radius: 10px; display: flex; align-items: center; justify-content: center; flex: none; font-size: 38px; color: #333; line-height: 52px; }
.tg.on { background: #c5e9dd; color: #00b97f; }
.tg.it { font-family: "Liberation Serif", serif; font-style: italic; font-size: 38px; }
.tg.un { text-decoration: underline; font-size: 34px; text-underline-offset: 2px; text-decoration-thickness: 3px; }
.aa2 { width: 26px; text-align: center; font-size: 34px; color: #333; line-height: 34px; border-bottom: 4px solid #ccc; flex: none; }
.ab { font-size: 30px; color: #444; width: 34px; flex: none; letter-spacing: -1px; }
.sx { font-size: 32px; color: #333; flex: none; line-height: 40px; }
.sx sup, .sx sub { color: #00b97f; font-size: 17px; font-weight: 700; line-height: 0; }
.x1 { margin-left: 42px; width: 32px; }
.x2 { margin-left: 58px; width: 32px; }
.chk { display: flex; align-items: center; height: 28px; font-size: 25.500px; color: #333; white-space: nowrap; }
.box { width: 28px; height: 28px; box-sizing: border-box; margin-right: 13px; border: 2px solid #ccc; border-radius: 5px; background: #fff; flex: none; display: flex; align-items: center; justify-content: center; }
.box.green { background: #00b97f; border-color: #00a873; }
.rule { margin-bottom: 0; margin-left: 0; margin-right: 0; border: 0; height: 2px; background: #e4e4e4; }
.p-lbl { font-size: 27.500px; color: #444; white-space: nowrap; flex: none; }
.r-lbl { margin-left: auto; margin-right: 18px; }
.p-mini { width: 110px; height: 54px; padding-left: 12px; padding-right: 17px; justify-content: space-between; }
.p-mini .sq { margin-left: 16px; }
.chev { display: block; flex: none; fill: none; stroke: #333; stroke-width: 3; }
.c-black { margin-left: auto; padding-left: 12px; }
.swatch { width: 47px; height: 26px; box-sizing: border-box; border: 1px solid #eee; border-radius: 2px; display: flex; align-items: center; justify-content: center; }
.swatch i { width: 32px; height: 16px; border-radius: 3px; background: #222; }
.p-wide { width: 174px; height: 54px; margin-left: 18px; padding-left: 5px; padding-right: 17px; justify-content: space-between; }
.blue-sw { width: 120px; height: 40px; border-radius: 8px; background: #2162ff; }
.ln-thick { width: 48px; height: 3px; background: #333; margin-left: 1px; }
.ln-thin { width: 48px; height: 1px; background: #333; margin-left: 1px; }
.p-frame { margin-left: auto; width: 174px; height: 90px; padding-left: 18px; padding-right: 17px; justify-content: space-between; }

.status {
  height: 59px;
  box-sizing: border-box;
  flex: none;
  border-top: 2px solid #e2e2e2;
  background: #f4f4f5;
  display: flex;
  align-items: center;
}
.s-vr { width: 1px; height: 42px; background: #d8d8d8; }
.s1 { margin-left: 21px; }
.s2 { margin-left: 34px; }
.s3 { margin-left: 26px; }
.page-sel { margin-left: 9px; width: 198px; height: 56px; box-sizing: border-box; border: 2px solid #ececee; border-radius: 12px; background: #efeff1; display: flex; align-items: center; flex: none; align-self: flex-start; margin-top: 2px; }
.page-name { width: 165px; padding-left: 12px; box-sizing: border-box; font-size: 25.500px; color: #111; font-weight: 500; }
.page-drop { flex: 1; display: flex; justify-content: center; align-items: center; height: 100%; background: #f4f4f5; border-radius: 0 10px 10px 0; }
.s4 { margin-left: 7px; }
.s5 { margin-left: 41px; }
.s6 { margin-left: 42px; }
.page-on { margin-left: 45px; width: 101px; color: #00b97f; font-weight: 700; font-size: 28px; flex: none; white-space: nowrap; }
.s7 { margin-left: 38px; width: 2px; }
.s-info { margin-left: 1048px; width: 178px; color: #333; font-size: 27.500px; flex: none; white-space: nowrap; }
.s8 { margin-left: 39px; }
.s9 { margin-left: 30px; }
.s10 { margin-left: 25px; }
.s11 { margin-left: 29px; }
.s12 { margin-left: 30px; }
.minus-b { margin-left: 28px; width: 16px; height: 2px; background: #444; flex: none; }
.slider { margin-left: 11px; position: relative; width: 199px; height: 5px; border-radius: 3px; background: #e0e0e0; flex: none; }
.fill { width: 75px; height: 5px; background: #000; border-radius: 3px; }
.knob { position: absolute; left: 63px; top: -9px; width: 23px; height: 23px; box-sizing: border-box; border: 4px solid #000; border-radius: 50%; background: #fff; }
.s13 { margin-left: 12px; }
.zoom-v { margin-left: 26px; width: 63px; font-size: 25px; color: #333; flex: none; }
.s14 { margin-left: 14px; border-left-width: 5.500px; border-right-width: 5.500px; border-top-width: 7px; }
.s15 { margin-left: 37px; }
.s16 { margin-left: 43px; }
</style>
